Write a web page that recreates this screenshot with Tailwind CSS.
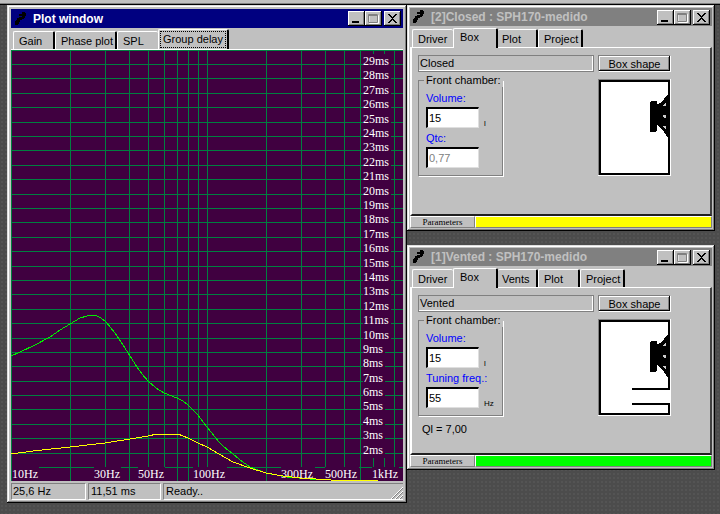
<!DOCTYPE html>
<html lang="en">
<head>
  <meta charset="UTF-8" />
  <meta name="viewport" content="width=device-width, initial-scale=1.0" />
  <title>Plot window</title>
  <script src="https://cdn.jsdelivr.net/npm/@tailwindcss/browser@4"></script>
</head>

<body class="min-h-screen bg-[#4c4c4c] bg-[radial-gradient(#545454_1px,transparent_1px)] bg-[length:4px_4px] font-['Liberation_Sans',Arial,sans-serif] text-[11px] leading-3 text-black">
  <!-- Shared symbols -->
  <svg class="hidden">
    <symbol id="app-icon" viewBox="0 0 13 14">
      <path d="M8 0h3v1h1v3h-1v2h-1v1h-2v1h-2v2h-1v2h-1v1h-3v-4h1v-1h1v-2h2v-1h3v-1h-3v-2h3z" fill="#000" />
    </symbol>
    <symbol id="minimize" viewBox="0 0 17 15">
      <path d="M4 10h7v2h-7z" fill="#000" />
    </symbol>
    <symbol id="maximize" viewBox="0 0 17 15">
      <path d="M4 4h9v8h-9z" fill="none" stroke="#fff" />
      <path d="M3.500 3.500h9v8h-9zM3 4.500h10" fill="none" stroke="#808080" />
      <path d="M4.500 12.500h9v-8" fill="none" stroke="#fff" />
    </symbol>
    <symbol id="close" viewBox="0 0 17 15">
      <path d="M4 3h2v1h1v1h1v1h1v-1h1v-1h1v-1h2v1h-1v1h-1v1h-1v1h-1v1h1v1h1v1h1v1h1v1h-2v-1h-1v-1h-1v-1h-1v1h-1v1h-1v1h-2v-1h1v-1h1v-1h1v-1h1v-1h-1v-1h-1v-1h-1v-1h-1z" fill="#000" />
    </symbol>
    <symbol id="speaker" viewBox="0 0 20 45">
      <rect x="0" y="7" width="7" height="31" rx="2" fill="#000" />
      <path d="M6 11l2-1 2-1 4-4 3-4h3v43h-2l-4-6-5-5-1-2-2-1z" fill="#000" />
      <path d="M13 11l2-2h1v2l-1 1h-2zM12 22l2-1h2v3h-2zM13 32h2l1 1v2h-1z" fill="#ccc" />
    </symbol>
  </svg>

  <div class="h-[5px] border-b border-black bg-[#c0c0c0] shadow-[inset_0_-1px_0_#808080]"></div>

  <main class="flex items-start pr-[5px] pl-[7px]">
    <!-- Plot window -->
    <section class="min-w-0 flex-1 bg-[#c0c0c0] p-1 pb-[3px] shadow-[inset_-1px_-1px_0_#000,inset_1px_1px_0_#dfdfdf,inset_-2px_-2px_0_#808080,inset_2px_2px_0_#fff]">
      <header class="flex h-[19px] items-center bg-[#000080] pr-0.5 pl-[3px] text-white">
        <svg class="h-3.5 w-[13px]"><use href="#app-icon" /></svg>
        <h1 class="ml-1.5 flex-1 text-[12px] font-bold">Plot window</h1>
        <button aria-label="Minimize" class="h-[15px] w-[17px] bg-[#c0c0c0] shadow-[inset_-1px_-1px_0_#000,inset_1px_1px_0_#fff,inset_-2px_-2px_0_#808080]"><svg class="h-[15px] w-[17px]"><use href="#minimize" /></svg></button>
        <button aria-label="Maximize" class="h-[15px] w-[17px] bg-[#c0c0c0] shadow-[inset_-1px_-1px_0_#000,inset_1px_1px_0_#fff,inset_-2px_-2px_0_#808080]"><svg class="h-[15px] w-[17px]"><use href="#maximize" /></svg></button>
        <button aria-label="Close" class="ml-0.5 h-[15px] w-[17px] bg-[#c0c0c0] shadow-[inset_-1px_-1px_0_#000,inset_1px_1px_0_#fff,inset_-2px_-2px_0_#808080]"><svg class="h-[15px] w-[17px]"><use href="#close" /></svg></button>
      </header>
      <nav class="flex h-[22px] items-end border-b border-white pl-0.5">
        <button class="h-[18px] w-[42px] rounded-t-xs border-t border-r-2 border-l border-t-white border-r-black border-l-white pl-[5px] text-left">Gain</button>
        <button class="h-[18px] w-[62px] rounded-t-xs border-t border-r-2 border-l border-t-white border-r-black border-l-white pl-[5px] text-left">Phase plot</button>
        <button class="h-[18px] w-[41px] rounded-t-xs border-t border-l border-white pl-[5px] text-left">SPL</button>
        <button class="h-5 w-[71px] rounded-t-xs border-t border-r-2 border-l border-t-white border-r-black border-l-white p-px"><span class="block h-[17px] border border-dotted border-black leading-[14px] whitespace-nowrap">Group delay</span></button>
      </nav>
      <svg id="plot" viewBox="11 50 392 431" class="block w-full bg-[#400040] font-['Liberation_Serif',serif] text-[12px]">
        <g id="grid" fill="#008040" shape-rendering="crispEdges"></g>
        <g id="labels" fill="#fff"></g>
        <polyline fill="none" stroke="#00f000" shape-rendering="crispEdges" points="11,356 20,352 35,345 50,337 60,330 70,324 75,321 80,318 87,316 92,315 97,316 101,318 106,322 115,333 123,345 130,356 137,367 142,374 148,381 156,388 164,393 177,398 183,401 188,405 198,415 207,427 219,442 224,447 232,453 240,460 250,467 258,470 266,473 287,477 310,479 331,480 378,480" />
        <polyline fill="none" stroke="#ffff00" shape-rendering="crispEdges" points="11,454 33,451 70,447 105,443 130,439 148,436 157,434 178,434 188,438 198,443 207,447 219,454 233,462 250,468 266,473 283,476 300,478 331,480 378,480" />
      </svg>
      <footer class="flex h-[19px] gap-0.5 pt-0.5">
        <span class="w-[75px] border border-t-[#808080] border-r-white border-b-white border-l-[#808080] pl-px leading-[15px]">25,6 Hz</span>
        <span class="w-[73px] border border-t-[#808080] border-r-white border-b-white border-l-[#808080] pl-0.5 leading-[15px]">11,51 ms</span>
        <span class="flex flex-1 items-end justify-between border border-r-0 border-t-[#808080] border-b-white border-l-[#808080] pl-0.5 leading-[15px]">Ready..
          <svg class="h-3 w-3" viewBox="0 0 12 12"><path d="M0 12L12 0M4 12l8-8M8 12l4-4" stroke="#fff" /><path d="M1 12L12 1M5 12l7-7M9 12l3-3" stroke="#808080" /></svg>
        </span>
      </footer>
    </section>

    <div class="flex w-[308px] shrink-0 flex-col gap-3.5">
      <!-- Closed box -->
      <section class="bg-[#c0c0c0] p-[3px] shadow-[inset_-1px_-1px_0_#000,inset_1px_1px_0_#dfdfdf,inset_-2px_-2px_0_#808080,inset_2px_2px_0_#fff]">
        <header class="flex h-[18px] items-center bg-[#808080] pr-0.5 pl-0.5 text-[#c0c0c0]">
          <svg class="h-3.5 w-[13px]"><use href="#app-icon" /></svg>
          <h2 class="ml-1.5 flex-1 text-[12px] font-bold">[2]Closed : SPH170-medido</h2>
          <button aria-label="Minimize" class="h-[15px] w-[17px] bg-[#c0c0c0] shadow-[inset_-1px_-1px_0_#000,inset_1px_1px_0_#fff,inset_-2px_-2px_0_#808080]"><svg class="h-[15px] w-[17px]"><use href="#minimize" /></svg></button>
          <button aria-label="Maximize" class="h-[15px] w-[17px] bg-[#c0c0c0] shadow-[inset_-1px_-1px_0_#000,inset_1px_1px_0_#fff,inset_-2px_-2px_0_#808080]"><svg class="h-[15px] w-[17px]"><use href="#maximize" /></svg></button>
          <button aria-label="Close" class="ml-0.5 h-[15px] w-[17px] bg-[#c0c0c0] shadow-[inset_-1px_-1px_0_#000,inset_1px_1px_0_#fff,inset_-2px_-2px_0_#808080]"><svg class="h-[15px] w-[17px]"><use href="#close" /></svg></button>
        </header>
        <nav class="flex h-[21px] items-end pl-0.5">
          <button class="h-[18px] w-[41px] rounded-t-xs border-t border-l border-white pl-[5px] text-left">Driver</button>
          <button class="z-10 -mb-px h-5 w-[45px] rounded-t-xs border-t border-r-2 border-l border-t-white border-r-black border-l-white bg-[#c0c0c0] pb-1 pl-[6px] text-left">Box</button>
          <button class="h-[18px] w-[40px] rounded-t-xs border-t border-r-2 border-t-white border-r-black pl-[4px] text-left">Plot</button>
          <button class="h-[18px] w-[45px] rounded-t-xs border-t border-r-2 border-l border-t-white border-r-black border-l-white pl-[5px] text-left">Project</button>
        </nav>
        <div class="h-[169px] border-t border-r-2 border-b-2 border-l-2 border-t-white border-r-[#404040] border-b-[#202020] border-l-white pt-[7px] pl-1.5">
          <div class="flex gap-1">
            <output class="h-[17px] w-44 border border-[#808080] pl-px leading-[15px] shadow-[inset_-1px_-1px_0_#fff]">Closed</output>
            <div class="h-[17px] w-[73px] border border-t-[#808080] border-r-white border-b-white border-l-[#808080]">
              <button class="block h-[15px] w-full bg-[#c0c0c0] shadow-[inset_-1px_-1px_0_#000,inset_1px_1px_0_#fff,inset_-2px_-2px_0_#808080]">Box shape</button>
            </div>
          </div>
          <div class="mt-0.5 flex items-end gap-[95px]">
            <fieldset class="h-[102px] w-[85px] min-w-0 border border-[#808080] pl-[7px] shadow-[1px_1px_0_#fff]">
              <legend class="-ml-0.5 px-0.5 leading-[13px] whitespace-nowrap">Front chamber:</legend>
              <label for="closed-volume" class="mt-[5px] block text-[#0000ff]">Volume:</label>
              <div class="mt-[3px] flex items-end gap-[5px]">
                <input id="closed-volume" value="15" class="h-[21px] w-[53px] border-t-2 border-r border-b border-l-2 border-t-black border-r-[#dfdfdf] border-b-[#dfdfdf] border-l-black bg-white pl-px" />
                <span class="text-[8px] leading-[8px]">l</span>
              </div>
              <label for="closed-qtc" class="mt-1 block text-[#0000ff]">Qtc:</label>
              <input id="closed-qtc" value="0,77" disabled class="mt-[3px] block h-[21px] w-[53px] border-t-2 border-r border-b border-l-2 border-t-black border-r-[#dfdfdf] border-b-[#dfdfdf] border-l-black bg-white pl-px text-[#808080]" />
            </fieldset>
            <svg class="h-[97px] w-[73px]" viewBox="0 0 73 97" shape-rendering="crispEdges">
              <path d="M0 0h73v97h-73z" fill="#fff" />
              <path d="M0 0h72v96h-72z" fill="#808080" />
              <path d="M1 1h71v95h-71z" fill="#000" />
              <path d="M3 3h67v91h-67z" fill="#fff" />
              <use href="#speaker" x="52" y="15" width="20" height="45" />
            </svg>
          </div>
        </div>
        <footer class="flex h-3 font-['Liberation_Serif',serif] text-[9px]">
          <span class="w-[65px] border border-t-white border-r-[#808080] border-b-[#808080] border-l-white text-center leading-[10px]">Parameters</span>
          <span class="flex-1 border border-t-white border-r-[#808080] border-b-[#808080] border-l-white bg-[#ffff00]"></span>
        </footer>
      </section>

      <!-- Vented box -->
      <section class="bg-[#c0c0c0] p-[3px] shadow-[inset_-1px_-1px_0_#000,inset_1px_1px_0_#dfdfdf,inset_-2px_-2px_0_#808080,inset_2px_2px_0_#fff]">
        <header class="flex h-[18px] items-center bg-[#808080] pr-0.5 pl-0.5 text-[#c0c0c0]">
          <svg class="h-3.5 w-[13px]"><use href="#app-icon" /></svg>
          <h2 class="ml-1.5 flex-1 text-[12px] font-bold">[1]Vented : SPH170-medido</h2>
          <button aria-label="Minimize" class="h-[15px] w-[17px] bg-[#c0c0c0] shadow-[inset_-1px_-1px_0_#000,inset_1px_1px_0_#fff,inset_-2px_-2px_0_#808080]"><svg class="h-[15px] w-[17px]"><use href="#minimize" /></svg></button>
          <button aria-label="Maximize" class="h-[15px] w-[17px] bg-[#c0c0c0] shadow-[inset_-1px_-1px_0_#000,inset_1px_1px_0_#fff,inset_-2px_-2px_0_#808080]"><svg class="h-[15px] w-[17px]"><use href="#maximize" /></svg></button>
          <button aria-label="Close" class="ml-0.5 h-[15px] w-[17px] bg-[#c0c0c0] shadow-[inset_-1px_-1px_0_#000,inset_1px_1px_0_#fff,inset_-2px_-2px_0_#808080]"><svg class="h-[15px] w-[17px]"><use href="#close" /></svg></button>
        </header>
        <nav class="flex h-[21px] items-end pl-0.5">
          <button class="h-[18px] w-[41px] rounded-t-xs border-t border-l border-white pl-[5px] text-left">Driver</button>
          <button class="z-10 -mb-px h-5 w-[45px] rounded-t-xs border-t border-r-2 border-l border-t-white border-r-black border-l-white bg-[#c0c0c0] pb-1 pl-[6px] text-left">Box</button>
          <button class="h-[18px] w-[40px] rounded-t-xs border-t border-r-2 border-t-white border-r-black pl-[4px] text-left">Vents</button>
          <button class="h-[18px] w-[42px] rounded-t-xs border-t border-r-2 border-l border-t-white border-r-black border-l-white pl-[5px] text-left">Plot</button>
          <button class="h-[18px] w-[45px] rounded-t-xs border-t border-r-2 border-l border-t-white border-r-black border-l-white pl-[5px] text-left">Project</button>
        </nav>
        <div class="h-[168px] border-t border-r-2 border-b-2 border-l-2 border-t-white border-r-[#404040] border-b-[#202020] border-l-white pt-[7px] pl-1.5">
          <div class="flex gap-1">
            <output class="h-[17px] w-44 border border-[#808080] pl-px leading-[15px] shadow-[inset_-1px_-1px_0_#fff]">Vented</output>
            <div class="h-[17px] w-[73px] border border-t-[#808080] border-r-white border-b-white border-l-[#808080]">
              <button class="block h-[15px] w-full bg-[#c0c0c0] shadow-[inset_-1px_-1px_0_#000,inset_1px_1px_0_#fff,inset_-2px_-2px_0_#808080]">Box shape</button>
            </div>
          </div>
          <div class="mt-0.5 flex items-end gap-[95px]">
            <fieldset class="h-[102px] w-[85px] min-w-0 border border-[#808080] pl-[7px] shadow-[1px_1px_0_#fff]">
              <legend class="-ml-0.5 px-0.5 leading-[13px] whitespace-nowrap">Front chamber:</legend>
              <label for="vented-volume" class="mt-[5px] block text-[#0000ff]">Volume:</label>
              <div class="mt-[3px] flex items-end gap-[5px]">
                <input id="vented-volume" value="15" class="h-[21px] w-[53px] border-t-2 border-r border-b border-l-2 border-t-black border-r-[#dfdfdf] border-b-[#dfdfdf] border-l-black bg-white pl-px" />
                <span class="text-[8px] leading-[8px]">l</span>
              </div>
              <label for="vented-tuning" class="mt-1 block text-[#0000ff]">Tuning freq.:</label>
              <div class="mt-[3px] flex items-end gap-[5px]">
                <input id="vented-tuning" value="55" class="h-[21px] w-[53px] border-t-2 border-r border-b border-l-2 border-t-black border-r-[#dfdfdf] border-b-[#dfdfdf] border-l-black bg-white pl-px" />
                <span class="text-[8px] leading-[8px]">Hz</span>
              </div>
            </fieldset>
            <svg class="h-[97px] w-[73px]" viewBox="0 0 73 97" shape-rendering="crispEdges">
              <path d="M0 0h73v97h-73z" fill="#fff" />
              <path d="M0 0h72v96h-72z" fill="#808080" />
              <path d="M1 1h71v95h-71z" fill="#000" />
              <path d="M3 3h67v91h-67zM70 71h2v13h-2z" fill="#fff" />
              <path d="M34 69h38v2h-38zM34 84h38v2h-38z" fill="#000" />
              <use href="#speaker" x="52" y="15" width="20" height="45" />
            </svg>
          </div>
          <p class="mt-[7px] ml-1">Ql = 7,00</p>
        </div>
        <footer class="flex h-3 font-['Liberation_Serif',serif] text-[9px]">
          <span class="w-[65px] border border-t-white border-r-[#808080] border-b-[#808080] border-l-white text-center leading-[10px]">Parameters</span>
          <span class="flex-1 border border-t-white border-r-[#808080] border-b-[#808080] border-l-white bg-[#00ff00]"></span>
        </footer>
      </section>
    </div>
  </main>

  <script>
    const columns = [11, 70, 105, 129, 148, 164, 177, 188, 198, 207, 266, 301, 325, 344, 360, 373, 384, 394];
    const frequencies = [
      { x: 12, text: '10Hz' },
      { x: 94, text: '30Hz' },
      { x: 138, text: '50Hz' },
      { x: 193, text: '100Hz' },
      { x: 281, text: '300Hz' },
      { x: 325, text: '500Hz' },
      { x: 372, text: '1kHz' }
    ];

    let grid = '<rect x="11" y="50" width="392" height="1" />';
    columns.forEach((x) => {
      grid += `<rect x="${x}" y="50" width="1" height="431" />`;
    });

    let labels = '';
    // labels are opaque and cover the grid behind them
    function addLabel(x, y, text, width) {
      labels += `<rect x="${x}" y="${y - 11}" width="${width}" height="15" fill="#400040" />`;
      labels += `<text x="${x}" y="${y}">${text}</text>`;
    }

    for (let ms = 1; ms <= 29; ms++) {
      const y = Math.round(481.4 - ms * 14.39);
      grid += `<rect x="11" y="${y}" width="392" height="1" />`;
      if (ms > 1) addLabel(363, y + 1, ms + 'ms', ms > 9 ? 28 : 22);
    }
    frequencies.forEach((f) => addLabel(f.x, 478, f.text, f.text.length * 7 - 1));

    document.getElementById('grid').innerHTML = grid;
    document.getElementById('labels').innerHTML = labels;
  </script>
</body>
</html>
